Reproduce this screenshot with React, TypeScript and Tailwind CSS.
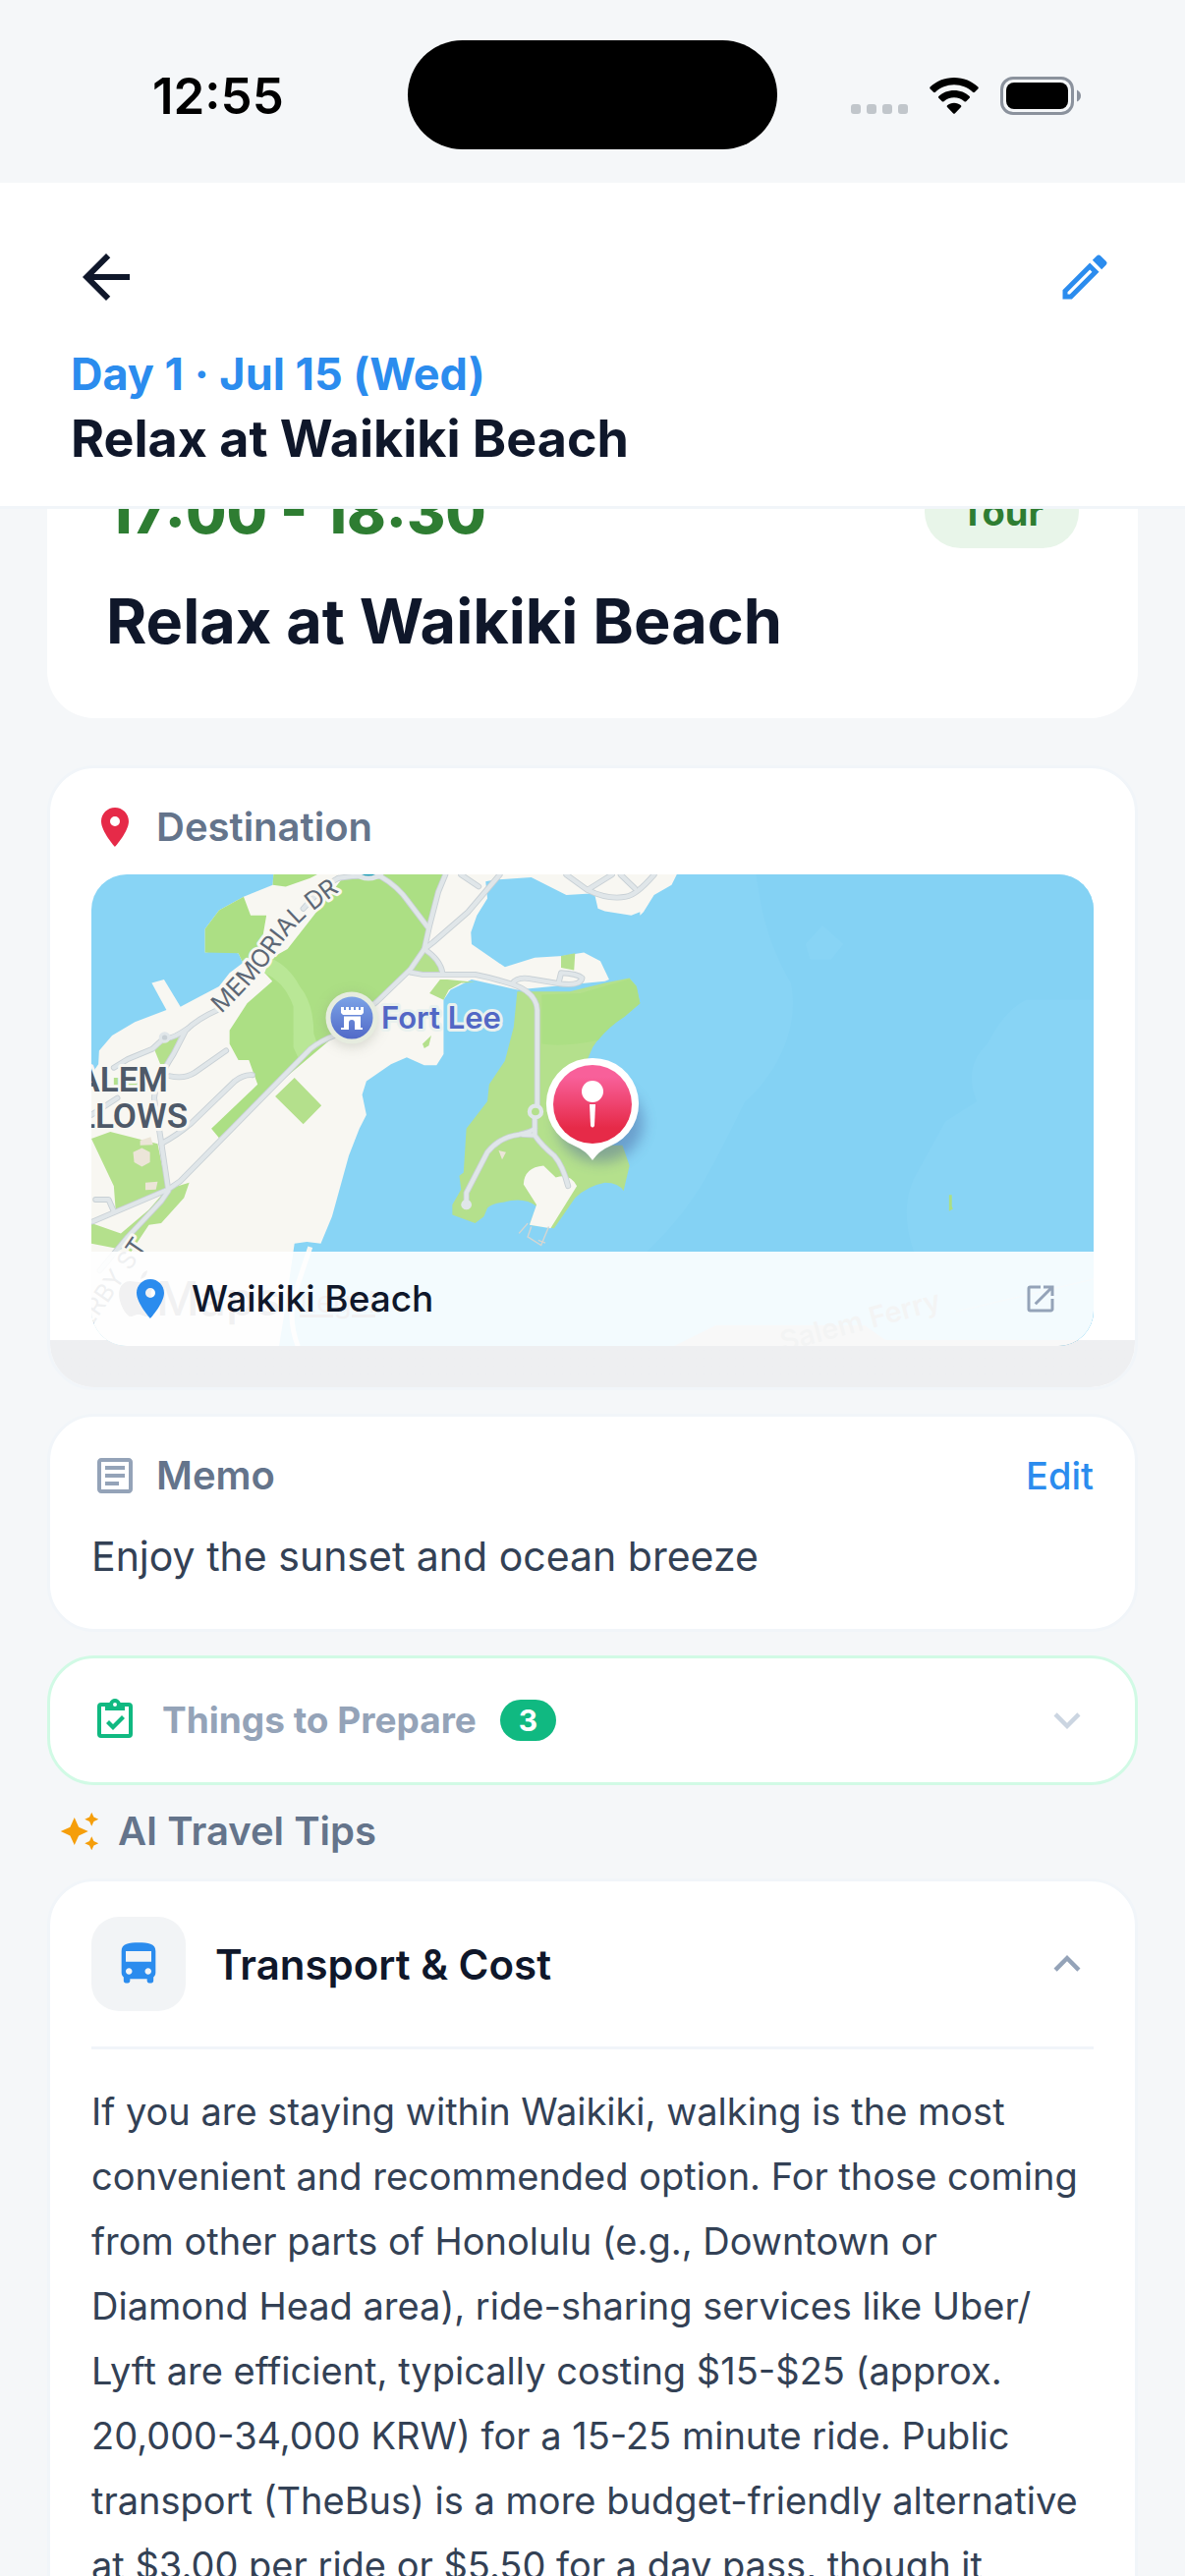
import type { ReactNode } from "react";
import { MdArrowBack, MdOutlineEdit, MdPlace, MdOpenInNew, MdOutlineArticle, MdExpandMore, MdExpandLess, MdAutoAwesome, MdDirectionsBus } from "react-icons/md";

function StatusBar() {
  return (
    <div className="relative flex h-[186px] shrink-0 items-start justify-between pl-[155px] pr-[106px] pt-[68px]">
      <span className="text-[51px] font-semibold leading-[60px] text-black">12:55</span>
      <div className="absolute left-1/2 top-[41px] h-[111px] w-[376px] -translate-x-1/2 rounded-full bg-black" />
      <div className="flex items-end gap-[22px] pt-[10px]">
        <div className="flex gap-[6px] pb-[1px]">
          {[0, 1, 2, 3].map((i) => (
            <span key={i} className="size-[10px] rounded-[3px] bg-[#c1c6cb]" />
          ))}
        </div>
        <svg className="h-[39px] w-[50px]" viewBox="0 0 50 39" fill="black" aria-label="Wi-Fi">
          <path d="M25 1C15.300 1 6.500 4.800.6 10.600Q-.2 11.500.7 12.400L4 15.700Q5 16.600 6 15.700C11 11 17.600 8.200 25 8.200S39 11 44 15.700Q45 16.600 46 15.700L49.300 12.400Q50.200 11.500 49.400 10.600C43.500 4.800 34.700 1 25 1Z" />
          <path d="M25 14C18.800 14 13.300 16.300 9.300 20.100Q8.500 21 9.300 21.800L12.800 25.200Q13.700 26 14.600 25.200C17.400 22.700 21 21.200 25 21.200S32.600 22.700 35.400 25.200Q36.300 26 37.200 25.200L40.700 21.800Q41.500 21 40.700 20.100C36.700 16.300 31.200 14 25 14Z" />
          <path d="M25 26.800C22.300 26.800 19.900 27.700 18 29.200Q17.200 30.200 18 31L24.200 37.400Q25 38.200 25.800 37.400L32 31Q32.800 30.200 32 29.200C30.100 27.700 27.700 26.800 25 26.800Z" />
        </svg>
        <svg className="h-[39px] w-[82px]" viewBox="0 0 82 39" aria-label="Battery">
          <rect x="1.500" y="1.500" width="72" height="36" rx="11.500" fill="none" stroke="#8b929d" strokeWidth="3" />
          <rect x="6" y="6" width="63" height="27" rx="8" fill="black" />
          <path d="M78 13.500Q82 15.500 82 19.500T78 25.500Z" fill="#8b929d" />
        </svg>
      </div>
    </div>
  );
}

function Header() {
  return (
    <header className="shrink-0 border-b-3 border-[#f1f5f9] bg-white px-[72px] pb-[35px] pt-[60px]">
      <div className="flex items-center justify-between">
        <button aria-label="Back" className="text-[#0f172a]">
          <MdArrowBack className="size-[72px]" />
        </button>
        <button aria-label="Edit plan" className="text-[#2b8cee]">
          <MdOutlineEdit className="size-[60px]" />
        </button>
      </div>
      <p className="mt-[30px] text-[45px] font-bold leading-[66px] text-[#2b8cee]">Day 1 · Jul 15 (Wed)</p>
      <h1 className="text-[52px] font-bold leading-[66px] text-[#0f172a]">Relax at Waikiki Beach</h1>
    </header>
  );
}

const WATER = "#88d4f5";
const LAND = "#f8f7f2";
const GREEN = "#acdf84";
const PARK = "#b4e08c";

const ROADS = [
  "M740 40Q700 60 640 130 M395 430Q340 455 305 490L270 560Q220 640 215 690L235 820L255 960L40 1055",
  "M310 485Q260 520 245 511L210 545L140 575L100 600 M36 740L110 690",
  "M255 960L290 935L660 545Q690 520 730 505L850 405L945 310L985 250L1000 180L1025 80L1045 30",
  "M1200 30L1110 140L1010 230L985 250Q1030 280 1037 320",
  "M740 40Q800 30 860 35Q910 65 940 110L995 185",
  "M945 318L980 325H1130Q1180 335 1240 355Q1305 380 1307 430V720",
  "M1236 352Q1250 330 1290 338L1370 352Q1430 360 1435 335Q1420 322 1375 320L1368 350",
  "M1300 745V800L1265 798 M1300 780Q1290 790 1255 798Q1200 805 1165 850L1105 970V1005 M1300 800Q1320 830 1355 860Q1380 890 1395 950",
  "M260 625Q300 635 330 615L420 550 M235 825Q280 800 320 765L445 640Q470 620 495 622",
  "M255 965L235 995L140 1100L60 1200 M48 990H85L100 1025",
  "M1090 30L1140 65 M1390 30L1450 75L1520 30 M1450 75Q1510 105 1560 95Q1590 90 1640 30 M1545 30L1585 70",
];

function CoastMap() {
  return (
    <svg className="block h-[480px] w-full" viewBox="0 0 1020 480" preserveAspectRatio="xMidYMid slice" role="img" aria-label="Map around Waikiki Beach">
      <defs>
        <linearGradient id="pinFill" x1="0" y1="0" x2="0" y2="1">
          <stop offset="0.150" stopColor="#f8609a" />
          <stop offset="0.800" stopColor="#e62a48" />
        </linearGradient>
        <linearGradient id="fortFill" x1="0" y1="0" x2="0" y2="1">
          <stop offset="0" stopColor="#7ea6e8" />
          <stop offset="1" stopColor="#4f66c6" />
        </linearGradient>
        <filter id="soft" x="-50%" y="-50%" width="200%" height="200%">
          <feGaussianBlur stdDeviation="7" />
        </filter>
        <path id="memorial" d="M132 142Q168 108 187 80T226 37T275 0" />
        <path id="derby" d="M-12 478L57 378" />
      </defs>
      <rect width="1020" height="480" fill={WATER} />
      <g transform="scale(0.357 0.3444) translate(-36 -29)">
        <path d="M1930 29C1950 150 1960 220 2030 350C2060 500 1970 640 1900 700C1820 860 1770 1000 1620 1143V1430H2900V29Z" fill="#84d2f4" />
        <path d="M2900 400L2700 400Q2640 430 2590 530Q2520 600 2560 700L2470 760L2380 930Q2340 1020 2380 1143V1430H2900Z" fill={WATER} />
        <path d="M2120 180L2180 235L2145 280H2085L2072 235Z" fill={WATER} />
        <path d="M555 29L553 60L470 95L400 135L360 190V260L400 255L455 262L468 290L430 320L400 360L290 420L243 340L208 350L250 430L160 465L95 505L58 550L56 590L36 620V1430H570L590 1300L615 1120L650 1115L690 1120L722 1040L770 860L800 780L820 740L808 680L820 640L890 590L935 570L985 593H1020L1040 560V400L1060 370L1120 340L1250 370L1500 345L1512 340L1487 285L1440 260L1380 270L1300 275L1215 303L1120 235L1118 200L1135 150L1165 100L1160 50L1185 45L1290 38L1390 90L1470 85L1480 130L1500 138L1575 150L1600 140L1600 150L1610 140L1640 90L1690 60L1705 29Z" fill={LAND} />
        <path d="M1250 375L1400 375L1500 350L1570 335L1590 360L1600 410L1555 450Q1500 480 1465 540L1440 600L1480 640L1500 830L1550 830L1570 890L1553 965Q1540 940 1500 940Q1450 950 1415 985L1355 1075L1285 1065L1305 1010Q1270 980 1210 998Q1180 1000 1165 1015L1155 1040L1130 1060L1065 1035V1005L1090 960L1085 920L1097 910L1105 780L1165 700L1170 650L1215 580L1240 480Z" fill={PARK} />
        <path d="M1430 380L1570 338L1590 360L1600 410L1555 450Q1510 480 1480 520Q1380 540 1320 530V385Z" fill={GREEN} />
        <path d="M555 29L553 60L590 65L660 40L680 29Z M470 95L400 135L360 190V260L455 262L468 290L490 288L520 240L535 150L490 150Z" fill={GREEN} />
        <path d="M760 29L700 110L640 190L595 250L560 270L530 320L552 345L480 410L430 490L430 530L455 578H485L510 650L378 780L400 808L520 690L945 318L985 250L1000 180L1045 29Z" fill={GREEN} />
        <path d="M545 275Q600 300 630 360Q670 410 670 500L680 530L625 570L612 540V420Q590 350 530 320Z" fill="#b9e796" />
        <path d="M615 630L692 712L640 767L560 685Z M945 318L985 250Q1030 285 1035 318Z M1375 270L1415 262L1412 312L1375 305Z M1050 340L1130 348L1090 350L1055 370L1040 400L1000 380L1030 340Z M980 530L1005 505L998 535L985 543Z M36 810L90 790L225 825L250 955L105 1020L100 950Z M250 960L315 940L300 985L235 1060L200 1065L150 1143L36 1120V1060L120 1090L200 1020Z M100 630H180V655H100Z M215 545L295 490L240 610Z" fill={PARK} />
        <path d="M1325 890Q1270 895 1268 945L1305 1005L1285 1065L1345 1075L1420 950Q1400 910 1360 925Z" fill={LAND} />
        <path d="M155 850L180 838L203 850V880L180 893L158 880Z M190 940L225 937L220 960L190 962Z M175 815L205 805L212 828L175 830Z M1197 845L1218 850L1207 872Z" fill="#ece5d8" />
        <path d="M1280 1060L1255 1090 M1290 1070L1280 1100L1318 1125L1340 1070M1310 1110L1330 1118" stroke="#d5d6d2" strokeWidth="4" fill="none" />
        <path d="M2481 976H2489V1010L2492 1018L2481 1024Z" fill={GREEN} />
        <path d="M660 1130L625 1240Q590 1330 625 1424" stroke={LAND} strokeWidth="14" fill="none" />
        <path d="M1695 1424L1816 1362H2240L2300 1405H2870V1430H1695Z" fill="#bcbdbd" />
        {ROADS.map((d) => (
          <path key={d} d={d} fill="none" stroke="#c8d0d5" strokeWidth="17" strokeLinejoin="round" strokeLinecap="round" />
        ))}
        {ROADS.map((d) => (
          <path key={d} d={d} fill="none" stroke="#e0e6e9" strokeWidth="12" strokeLinejoin="round" strokeLinecap="round" />
        ))}
        <circle cx="1302" cy="730" r="17" fill={PARK} stroke="#e0e6e9" strokeWidth="12" />
        <circle cx="245" cy="511" r="12" fill="#c8d0d5" stroke="#e0e6e9" strokeWidth="9" />
        <circle cx="1105" cy="1005" r="15" fill="#e0e6e9" />
      </g>

      <circle cx="282" cy="-15" r="19" fill="#1799b4" stroke="#dfe5e8" strokeWidth="5" />

      <g stroke={LAND} strokeWidth="6" strokeLinejoin="round" paintOrder="stroke" fill="#5d6775">
        <text fontSize="25"><textPath href="#memorial">MEMORIAL DR</textPath></text>
        <text fontSize="25"><textPath href="#derby">DERBY ST</textPath></text>
        <g fontFamily="Roboto, sans-serif" fontSize="35" fontWeight="600" textAnchor="end" fill="#4e5968">
          <text x="78" y="221">SALEM</text>
          <text x="98" y="258">WILLOWS</text>
        </g>
      </g>

      <circle cx="265" cy="149" r="26" fill="#8b8f80" opacity="0.350" filter="url(#soft)" />
      <circle cx="265" cy="146" r="24" fill="url(#fortFill)" stroke="#e6ecdf" strokeWidth="5" />
      <path d="M254 135h3v3h2v-3h3v3h2v-3h3v3h2v-3h3v3h2v-3h3v6l-2 2h-19l-2-2zM257 144.500h17v11.500h2v2h-8v-7q0-3-3-3t-3 3v7h-8v-2h3z" fill="white" />
      <text x="295" y="157" fontSize="31" fontWeight="600" fill="#5267c5" stroke="#e9f1ee" strokeWidth="6" strokeLinejoin="round" paintOrder="stroke">Fort Lee</text>

      <ellipse cx="518" cy="253" rx="44" ry="40" fill="#47619c" opacity="0.450" filter="url(#soft)" />
      <path d="M510 187a46.500 46.500 0 0 1 17 90q-10 4-17 14q-7-10-17-14a46.500 46.500 0 0 1 17-90z" fill="white" />
      <circle cx="510" cy="234" r="40" fill="url(#pinFill)" />
      <circle cx="510" cy="221" r="11" fill="white" />
      <path d="M507 234h6l-1 22q-2 3-4 0z" fill="white" />

      <text x="66" y="449" fontSize="48" fontWeight="500" fill="#73777c">Maps</text>
      <path d="M50 412q1-7 7-9q0 7-7 9M49 415c4 0 6-3 10-2q5 1 7 5q-7 5-5 12q1 5 7 8q-5 12-11 12c-4 0-5-2-9-2s-5 2-8 2c-6 0-18-24-8-33c6-5 10-2 17-2" fill="#73777c" />
      <text x="212" y="446" fontSize="30" fill="#73777c" textDecoration="underline">Legal</text>
      <text x="704" y="486" fontSize="29" fontWeight="600" fill="#8b8f93" transform="rotate(-15 704 486)">Salem Ferry</text>
      <path d="M880 445L1020 412" stroke="#b5c8d2" strokeWidth="1" />
    </svg>
  );
}

function ClipboardCheck() {
  return (
    <svg className="size-[48px] shrink-0 text-[#10b981]" viewBox="0 0 24 24" fill="currentColor" aria-hidden="true">
      <path d="M19 3H14.820C14.400 1.840 13.300 1 12 1S9.600 1.840 9.180 3H5A2 2 0 0 0 3 5V19A2 2 0 0 0 5 21H19A2 2 0 0 0 21 19V5A2 2 0 0 0 19 3M12 3A1 1 0 0 1 13 4A1 1 0 0 1 12 5A1 1 0 0 1 11 4A1 1 0 0 1 12 3M7 7H17V5H19V19H5V5H7V7M7.500 13.500L9 12L11 14L15.500 9.500L17 11L11 17L7.500 13.500Z" />
    </svg>
  );
}

const CARD = "rounded-[48px] border-3 border-[#f1f5f9] bg-white";

function SectionTitle({ icon, children }: { icon: ReactNode; children: ReactNode }) {
  return (
    <div className="flex items-center gap-[18px]">
      {icon}
      <h2 className="text-[40px] font-semibold leading-[48px] text-[#64748b]">{children}</h2>
    </div>
  );
}

export default function App() {
  return (
    <div className="flex h-screen flex-col bg-[#f5f7f9] font-['Inter',sans-serif]">
      <StatusBar />
      <Header />
      <main className="min-h-0 flex-1 overflow-y-auto px-[48px] [scrollbar-width:none]">
        <section className="-mt-[84px] rounded-[48px] bg-white px-[60px] pb-[57px] pt-[48px]">
          <div className="flex items-center justify-between">
            <p className="text-[60px] font-extrabold leading-[78px] text-[#2e7d32]">17:00 - 18:30</p>
            <span className="rounded-full bg-[#e8f5e9] px-[36px] py-[15px] text-[38px] font-bold leading-[44px] text-[#2e7d32]">Tour</span>
          </div>
          <h2 className="mt-[30px] text-[63px] font-bold leading-[84px] text-[#0f172a]">Relax at Waikiki Beach</h2>
        </section>

        <section className={`${CARD} mt-[48px] overflow-hidden`}>
          <div className="px-[42px] pt-[36px]">
            <SectionTitle icon={<MdPlace className="size-[48px] text-[#e62a48]" />}>Destination</SectionTitle>
          </div>
          <div className="bg-linear-to-t from-[#eeeff1] from-[48px] to-transparent to-[48px] px-[42px] pb-[42px] pt-[24px]">
            <div className="relative overflow-hidden rounded-[36px]">
              <CoastMap />
              <a href="#map" className="absolute inset-x-0 bottom-0 flex h-[96px] items-center bg-white/90 px-[36px]">
                <MdPlace className="size-[48px] text-[#2b8cee]" />
                <span className="ml-[18px] flex-1 text-[37px] font-medium text-[#0f172a]">Waikiki Beach</span>
                <MdOpenInNew className="size-[36px] text-[#94a3b8]" />
              </a>
            </div>
          </div>
        </section>

        <section className={`${CARD} mt-[24px] px-[42px] pb-[38px] pt-[36px]`}>
          <div className="flex items-center justify-between">
            <SectionTitle icon={<MdOutlineArticle className="size-[48px] text-[#94a3b8]" />}>Memo</SectionTitle>
            <button className="text-[38px] font-medium leading-[48px] text-[#2b8cee]">Edit</button>
          </div>
          <p className="mt-[22px] text-[41px] leading-[72px] text-[#334155]">Enjoy the sunset and ocean breeze</p>
        </section>

        <button className="mt-[24px] flex h-[132px] w-full items-center rounded-[48px] border-3 border-[#d1fae5] bg-white px-[42px]">
          <ClipboardCheck />
          <span className="ml-[24px] text-[37px] font-bold text-[#94a3b8]">Things to Prepare</span>
          <span className="ml-[24px] rounded-full bg-[#10b981] px-[19px] text-[30px] font-bold leading-[42px] text-white">3</span>
          <MdExpandMore className="ml-auto size-[54px] text-[#cbd5e1]" />
        </button>

        <div className="flex items-center gap-[18px] px-[12px] pb-[24px] pt-[23px]">
          <MdAutoAwesome className="size-[42px] text-[#f59e0b]" />
          <h2 className="text-[40px] font-semibold leading-[48px] text-[#64748b]">AI Travel Tips</h2>
        </div>

        <section className={`${CARD} px-[42px] pb-[42px] pt-[36px]`}>
          <button className="flex w-full items-center">
            <span className="flex size-[96px] items-center justify-center rounded-[28px] bg-[#f2f4f6]">
              <MdDirectionsBus className="size-[52px] text-[#2b8cee]" />
            </span>
            <span className="ml-[30px] text-[42px] font-semibold text-[#0f172a]">Transport &amp; Cost</span>
            <MdExpandLess className="ml-auto size-[54px] text-[#94a3b8]" />
          </button>
          <p className="mt-[36px] border-t-3 border-[#f1f5f9] pt-[30px] text-[38px] leading-[66px] text-[#334155]">
            If you are staying within Waikiki, walking is the most convenient and recommended option. For those coming from other parts of Honolulu (e.g., Downtown or Diamond Head area), ride-sharing services like Uber/<wbr />Lyft are efficient, typically costing $15-$25 (approx. 20,000-34,000 KRW) for a 15-25 minute ride. Public transport (TheBus) is a more budget-friendly alternative at $3.00 per ride or $5.50 for a day pass, though it
          </p>
        </section>
      </main>
    </div>
  );
}
